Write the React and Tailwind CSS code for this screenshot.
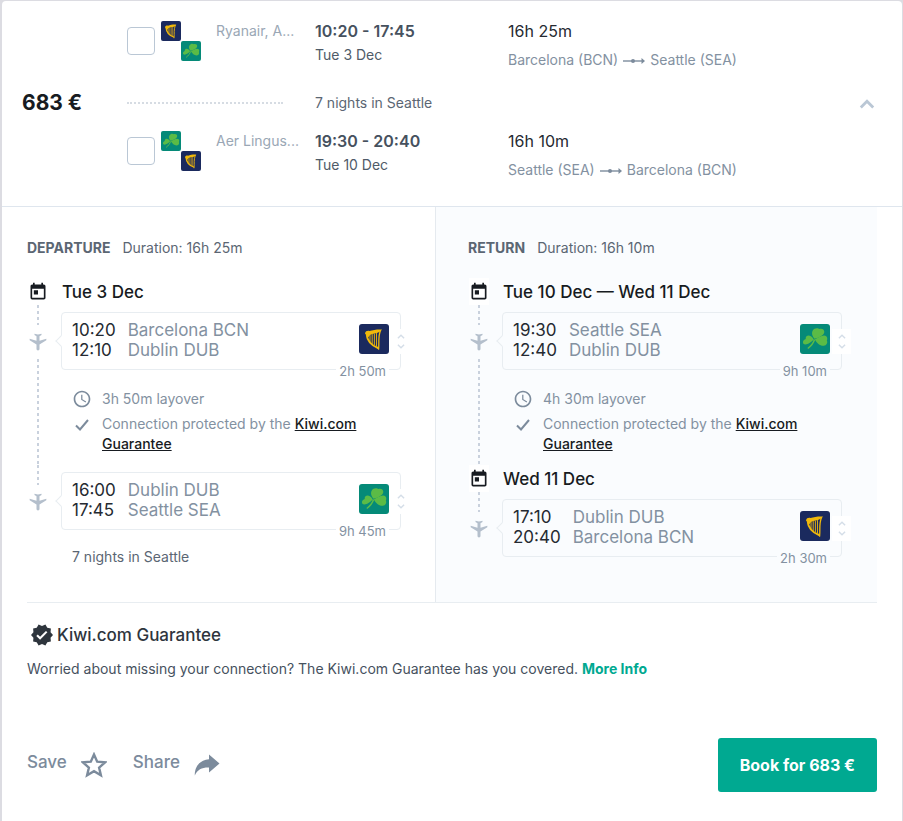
import React from "react";
import { MdToday, MdAccessTime, MdVerified } from "react-icons/md";

const RyanairLogo = ({ className }) => (
  <svg viewBox="0 0 30 30" className={className} role="img" aria-label="Ryanair">
    <rect width="30" height="30" rx="3" fill="#1b2a5e" />
    <g fill="none" stroke="#f1b90b" strokeLinecap="round">
      <path d="M7.5 9.5C8 15.500 11 21 19 24" strokeWidth="1.900" />
      <path d="M19.6 25.200C20.300 18 19 13 21.300 7" strokeWidth="1.300" />
      <path d="M11 11.500v6.500M13.200 10.500v9.500M15.400 10v11M17.500 9.500v12.500" strokeWidth="0.900" />
    </g>
    <path d="M6 9.5C6.500 7 8.500 6.500 10.500 7C14 6 18 5.200 23 5.500C22 7.500 19 9 15.500 9.500C12.500 10 11 10.500 9.500 13L7.500 13.500C8 12 7.500 10.500 6 9.500Z" fill="#f1b90b" />
  </svg>
);

const AerLingusLogo = ({ className }) => (
  <svg viewBox="0 0 30 30" className={className} role="img" aria-label="Aer Lingus">
    <rect width="30" height="30" rx="3" fill="#058a78" />
    <g fill="#5bbb46">
      <path d="M14.500 14.800C11 11 11.500 6.500 14.500 4.800C16.500 3.600 18.500 4.300 19.300 5C21.500 4 24.500 5.200 24.300 8C24 11.200 19.500 13.500 14.500 14.800Z" />
      <path d="M14.800 15.500C18 13.500 24 9.800 26.500 12.500C27.600 13.900 27.400 15.600 26.800 16.500C28 18.600 26.600 21.600 23.800 21.800C20 22.200 17 19 14.800 15.500Z" />
      <path d="M13.800 15.500C12 12.300 8.500 10.400 6.500 12.300C5.600 13.200 5.600 14.200 5.800 15C3.600 15.500 2.300 17.600 3.200 19.400C5.500 22.400 11 18.500 13.800 15.500Z" />
    </g>
    <path d="M14.500 15.500C13.500 19 11 22 7.800 24.500" fill="none" stroke="#5bbb46" strokeWidth="1.500" />
  </svg>
);

const logos = { ryanair: RyanairLogo, aerlingus: AerLingusLogo };

const PlaneIcon = ({ className }) => (
  <svg viewBox="0 0 24 24" className={className} aria-hidden="true">
    <path
      d="M2 8V10L10.200 15V20.500C10.200 21.400 11 22.200 12 22.200S13.800 21.400 13.800 20.500V15L22 10V8L13.800 10.500V5L16.200 3.500V2L12 3L7.800 2V3.500L10.200 5V10.500Z"
      fill="currentColor"
    />
  </svg>
);

const Chevron = ({ className }) => (
  <svg viewBox="0 0 16 10" className={className} aria-hidden="true">
    <path d="M1.800 8.500L8 2.300L14.200 8.500" fill="none" stroke="currentColor" strokeWidth="2.800" />
  </svg>
);

const CheckIcon = ({ className }) => (
  <svg viewBox="0 0 18 18" className={className} aria-hidden="true">
    <path d="M3 9.500L7 13.500L15 4" fill="none" stroke="currentColor" strokeWidth="2" />
  </svg>
);

const RouteArrow = () => (
  <svg viewBox="0 0 22 8" className="mt-0.5 h-2 w-[22px] shrink-0" aria-hidden="true">
    <path d="M0 4H20" stroke="#7c8b9c" strokeWidth="1.400" />
    <circle cx="10" cy="4" r="2" fill="#7c8b9c" />
    <path d="M18.500 1L22 4L18.500 7Z" fill="#7c8b9c" />
  </svg>
);

const SummaryRow = ({ airlines, carriers, time, date, duration, from, to }) => {
  const First = logos[airlines[0]];
  const Second = logos[airlines[1]];
  return (
    <div className="grid h-[50px] grid-cols-[188px_193px_1fr] items-start">
      <div className="flex items-start">
        <input
          type="checkbox"
          aria-label={`Select ${from} to ${to}`}
          className="mt-1.5 size-7 shrink-0 appearance-none rounded border border-[#bac7d5] bg-white"
        />
        <div className="ml-1.5 grid grid-cols-2">
          <First className="size-5" />
          <Second className="col-start-2 row-start-2 size-5" />
        </div>
        <span className="ml-[15px] text-sm leading-5 whitespace-nowrap text-[#9aa7b5]">{carriers}</span>
      </div>
      <div>
        <p className="text-base leading-5 font-semibold text-[#46515e]">{time}</p>
        <p className="mt-1 text-sm leading-5 text-[#4f5b68]">{date}</p>
      </div>
      <div>
        <p className="text-base leading-5 text-[#252a31]">{duration}</p>
        <p className="mt-[9px] flex items-center gap-[5px] text-sm leading-5 whitespace-nowrap text-[#8391a1]">
          {from} <RouteArrow /> {to}
        </p>
      </div>
    </div>
  );
};

const Dots = ({ className }) => (
  <div
    className={`w-0.5 bg-[repeating-linear-gradient(to_bottom,#c9d1dd_0_3px,transparent_3px_6px)] ${className}`}
  />
);

const DateRow = ({ children }) => (
  <div className="flex h-[27px] items-center">
    <div className="mr-[13px] flex w-[22px] justify-center">
      <span className="flex h-[27px] w-5 items-center justify-center bg-white">
        <MdToday className="size-5 shrink-0 text-[#171b21]" />
      </span>
    </div>
    <h3 className="text-[17px] leading-5 font-medium text-[#171b21]">{children}</h3>
  </div>
);

const Segment = ({ stops, airline, length, panel, last, children }) => {
  const Logo = logos[airline];
  return (
    <div className="flex">
      <div className="mr-3 flex w-[22px] shrink-0 flex-col items-center">
        <Dots className="h-5" />
        <PlaneIcon className="my-[7px] size-5 shrink-0 text-[#b4bfcc]" />
        {!last && <Dots className="flex-1" />}
      </div>
      <div className="min-w-0 flex-1 pt-[7px]">
        <div className="relative flex h-[58px] items-center justify-between rounded border border-[#e8edf1] pr-[11px] pb-0.5 pl-2.5">
          <span className={`absolute top-6 -left-[5px] size-2 rotate-45 border-b border-l border-[#e8edf1] ${panel}`} />
          <dl className="grid grid-cols-[auto_1fr] gap-x-3 text-[17px] leading-5">
            {stops.map(([time, place]) => (
              <React.Fragment key={time}>
                <dt className="text-[#252a31]">{time}</dt>
                <dd className="text-[#8391a1]">{place}</dd>
              </React.Fragment>
            ))}
          </dl>
          <Logo className="mb-0.5 size-[30px]" />
          <span className={`absolute right-[11px] -bottom-3 px-[3px] text-[13px] leading-5 text-[#8391a1] ${panel}`}>
            {length}
          </span>
          <button
            type="button"
            aria-label="Segment details"
            className="absolute top-4 -right-[10px] flex h-[25px] w-[19px] flex-col items-center justify-center gap-[5px] bg-white text-[#d5dee8]"
          >
            <Chevron className="h-[5px] w-2" />
            <Chevron className="h-[5px] w-2 rotate-180" />
          </button>
        </div>
        {children}
      </div>
    </div>
  );
};

const Layover = ({ time }) => (
  <div className="grid grid-cols-[20px_1fr] gap-x-2.5 gap-y-[5px] pt-[19px] pb-[11px] pl-[11px] text-sm leading-5 text-[#8391a1]">
    <MdAccessTime className="size-5 text-[#7c8b9c]" />
    <p>{time} layover</p>
    <CheckIcon className="mt-0.5 ml-px size-[18px] text-[#7c8b9c]" />
    <p>
      Connection protected by the{" "}
      <a href="#guarantee" className="font-medium text-[#171b21] underline">
        Kiwi.com Guarantee
      </a>
    </p>
  </div>
);

const PanelTitle = ({ title, duration }) => (
  <div className="mb-5 flex items-center gap-3 text-sm leading-5 text-[#5b6673]">
    <h2 className="font-bold uppercase">{title}</h2>
    <span>Duration: {duration}</span>
  </div>
);

const App = () => {
  return (
    <div className="min-h-screen bg-[#dcdce2] pt-px pr-px pl-0.5 font-['Inter',sans-serif]">
      <main className="min-h-[calc(100vh-1px)] rounded-t bg-white">
        <section className="flex items-center border-b border-[#dfe6ee] px-5 pt-5 pb-[25px]">
          <p className="mt-1 w-[105px] shrink-0 text-[21px] leading-7 font-bold text-[#171b21]">683 €</p>
          <div className="flex-1">
            <SummaryRow
              airlines={["ryanair", "aerlingus"]}
              carriers="Ryanair, A..."
              time="10:20 - 17:45"
              date="Tue 3 Dec"
              duration="16h 25m"
              from="Barcelona (BCN)"
              to="Seattle (SEA)"
            />
            <div className="grid h-[60px] grid-cols-[188px_1fr] items-center pt-1">
              <div className="mr-8 border-t-2 border-dotted border-[#d6dce3]" />
              <p className="text-sm leading-5 text-[#5b6673]">7 nights in Seattle</p>
            </div>
            <SummaryRow
              airlines={["aerlingus", "ryanair"]}
              carriers="Aer Lingus..."
              time="19:30 - 20:40"
              date="Tue 10 Dec"
              duration="16h 10m"
              from="Seattle (SEA)"
              to="Barcelona (BCN)"
            />
          </div>
          <button type="button" aria-label="Collapse" className="mt-1.5 flex size-[30px] items-center justify-center text-[#bac7d5]">
            <Chevron className="h-2.5 w-4" />
          </button>
        </section>

        <div className="px-[25px]">
          <div className="grid grid-cols-[48fr_52fr] border-b border-[#e8edf1]">
            <section className="pt-[31px] pr-[34px] pb-[35px]">
              <PanelTitle title="Departure" duration="16h 25m" />
              <DateRow>Tue 3 Dec</DateRow>
              <Segment
                stops={[["10:20", "Barcelona BCN"], ["12:10", "Dublin DUB"]]}
                airline="ryanair"
                length="2h 50m"
                panel="bg-white"
              >
                <Layover time="3h 50m" />
              </Segment>
              <Segment
                stops={[["16:00", "Dublin DUB"], ["17:45", "Seattle SEA"]]}
                airline="aerlingus"
                length="9h 45m"
                panel="bg-white"
                last
              >
                <p className="mt-[17px] pl-[11px] text-sm leading-5 text-[#5b6673]">7 nights in Seattle</p>
              </Segment>
            </section>

            <section className="border-l border-[#e5eaef] bg-[#fafcfe] pt-[31px] pr-[35px] pb-[35px] pl-8">
              <PanelTitle title="Return" duration="16h 10m" />
              <DateRow>Tue 10 Dec — Wed 11 Dec</DateRow>
              <Segment
                stops={[["19:30", "Seattle SEA"], ["12:40", "Dublin DUB"]]}
                airline="aerlingus"
                length="9h 10m"
                panel="bg-[#fafcfe]"
              >
                <Layover time="4h 30m" />
              </Segment>
              <DateRow>Wed 11 Dec</DateRow>
              <Segment
                stops={[["17:10", "Dublin DUB"], ["20:40", "Barcelona BCN"]]}
                airline="ryanair"
                length="2h 30m"
                panel="bg-[#fafcfe]"
                last
              />
            </section>
          </div>

          <section id="guarantee" className="pt-5">
            <h2 className="flex items-center gap-[3px] pl-[3px] text-[17px] leading-6 font-medium text-[#2e353d]">
              <MdVerified className="size-6" />
              Kiwi.com Guarantee
            </h2>
            <p className="mt-3 text-sm leading-5 text-[#46515e]">
              Worried about missing your connection? The Kiwi.com Guarantee has you covered.{" "}
              <a href="#more" className="font-bold text-[#00a991]">More Info</a>
            </p>
          </section>

          <footer className="flex items-center pt-[59px] pb-[29px]">
            <button type="button" className="flex items-center gap-3.5 pb-1 text-[17px] font-medium text-[#7c8b9c]">
              Save
              <svg viewBox="1 1 26 26" className="mt-1 size-[26px]" aria-hidden="true">
                <path
                  d="M14 3.500L17.200 10.700L25 11.400L19.100 16.600L20.900 24.300L14 20.200L7.100 24.300L8.900 16.600L3 11.400L10.800 10.700Z"
                  fill="none"
                  stroke="currentColor"
                  strokeWidth="2.400"
                />
              </svg>
            </button>
            <button type="button" className="ml-[26px] flex items-center gap-3.5 pb-1 text-[17px] font-medium text-[#7c8b9c]">
              Share
              <svg viewBox="0 0 26 22" className="mt-1 h-[22px] w-[26px]" aria-hidden="true">
                <path d="M15 0.500L25.500 9.500L15 18.500V13.500C8 13.300 3.500 15.500 0.800 21.500C0.500 12.500 6 5.800 15 5.200Z" fill="currentColor" />
              </svg>
            </button>
            <button
              type="button"
              className="ml-auto h-[54px] rounded-[3px] bg-[#00a991] px-[22px] text-base font-bold text-white"
            >
              Book for 683 €
            </button>
          </footer>
        </div>
      </main>
    </div>
  );
};

export default App;
